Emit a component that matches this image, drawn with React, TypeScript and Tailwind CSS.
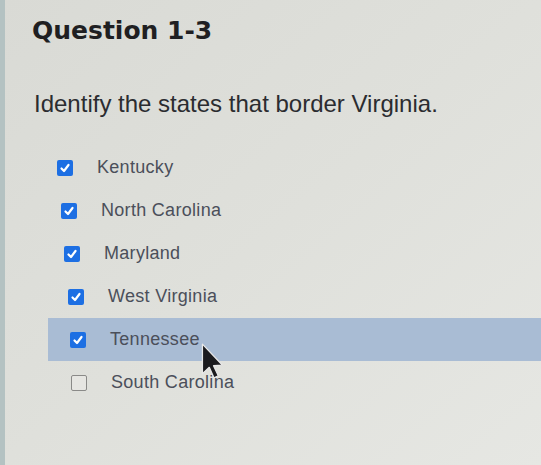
import React from "react";

type Option = { label: string; checked: boolean; indent: string; highlighted?: boolean };

const options: Option[] = [
  { label: "Kentucky", checked: true, indent: "pl-[9px]" },
  { label: "North Carolina", checked: true, indent: "pl-[13px]" },
  { label: "Maryland", checked: true, indent: "pl-[16px]" },
  { label: "West Virginia", checked: true, indent: "pl-[20px]" },
  { label: "Tennessee", checked: true, indent: "pl-[22px]", highlighted: true },
  { label: "South Carolina", checked: false, indent: "pl-[23px]" },
];

function Box({ checked }: { checked: boolean }) {
  if (!checked) {
    return <div className="h-[16px] w-[16px] shrink-0 rounded-[2px] border-[1.5px] border-[#8a8a88] bg-[#e6e6e2]" />;
  }
  return (
    <div className="flex h-[16px] w-[16px] shrink-0 items-center justify-center rounded-[2px] bg-[#1d6fe3]">
      <svg width="12" height="12" viewBox="0 0 12 12" fill="none">
        <path d="M2.5 6.5 L5 9 L9.5 3" stroke="white" strokeWidth="2.2" strokeLinecap="round" strokeLinejoin="round" />
      </svg>
    </div>
  );
}

function Cursor() {
  return (
    <svg className="absolute left-[199px] top-[342px]" width="28" height="38" viewBox="0 0 26 36">
      <path d="M3 2 L3 30 L9.5 24 L14 34 L18 32 L13.5 22.5 L22 22 Z" fill="#1b1b1e" stroke="#e8e8e8" strokeWidth="1.2" strokeLinejoin="round" />
    </svg>
  );
}

export default function App() {
  return (
    <div className="relative h-[465px] w-[541px] overflow-hidden bg-gradient-to-br from-[#d9dad5] via-[#dfe0db] to-[#e6e7e3] font-['Liberation_Sans',Arial,sans-serif]">
      <div className="absolute left-0 top-0 h-full w-[5px] bg-[#b4c2c2]" />
      <div className="pl-[32px] pt-[15px]">
        <h1 className="font-['DejaVu_Sans',sans-serif] text-[25px] font-bold leading-[32px] text-[#1f1f22]">Question 1-3</h1>
        <p className="mt-[43px] pl-[2px] text-[24px] leading-[28px] text-[#2b2c30]">
          Identify the states that border Virginia.
        </p>
      </div>
      <div className="mt-[28px] flex flex-col">
        {options.map((o) => (
          <div
            key={o.label}
            className={`ml-[48px] flex h-[43px] items-center ${o.indent} ${o.highlighted ? "bg-[#a9bcd4]" : ""}`}
          >
            <Box checked={o.checked} />
            <span className="ml-[24px] text-[18px] tracking-[0.3px] text-[#4b4f5a]">{o.label}</span>
          </div>
        ))}
      </div>
      <Cursor />
    </div>
  );
}
